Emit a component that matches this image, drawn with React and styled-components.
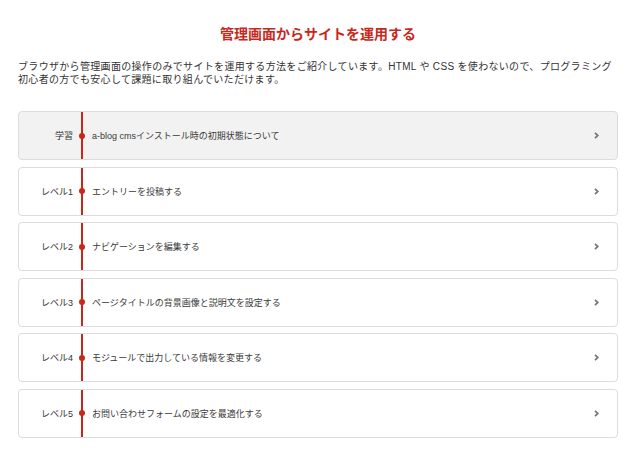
import React from "react";
import styled, { createGlobalStyle } from "styled-components";

const Global = createGlobalStyle`
  html, body { margin: 0; padding: 0; background: #fff; }
  body { font-family: "Liberation Sans", "Noto Sans CJK JP", sans-serif; color: #333; }
`;

const Page = styled.main`
  width: 600px;
  margin: 0 18px;
  padding-top: 24px;
`;

const Title = styled.h1`
  margin: 0;
  text-align: center;
  font-size: 14px;
  line-height: 20px;
  font-weight: bold;
  color: #c8281c;
`;

const Lead = styled.p`
  margin: 16px 0 0;
  font-size: 10px;
  line-height: 13px;
  letter-spacing: 0.32px;
  color: #333;
`;

const List = styled.ul`
  list-style: none;
  margin: 25px 0 0;
  padding: 0;
  display: flex;
  flex-direction: column;
  gap: 6.6px;
`;

const Card = styled.a`
  display: grid;
  grid-template-columns: 64px 1fr auto;
  align-items: stretch;
  height: 49px;
  box-sizing: border-box;
  border: 1px solid #dcdcdc;
  border-radius: 4px;
  background: ${(p) => (p.$active ? "#f2f2f2" : "#fff")};
  color: #333;
  text-decoration: none;
`;

const Label = styled.span`
  position: relative;
  display: flex;
  align-items: center;
  justify-content: flex-end;
  padding-right: 8px;
  border-right: 2px solid #c8281c;
  font-size: 9px;
  color: #333;
`;

const Dot = styled.span`
  position: absolute;
  right: -4px;
  top: 50%;
  width: 6px;
  height: 6px;
  margin-top: -3px;
  border-radius: 50%;
  background: #c8281c;
`;

const Name = styled.span`
  display: flex;
  align-items: center;
  padding-left: 9px;
  font-size: 9px;
  color: #3a3a3a;
`;

const Arrow = styled.span`
  display: flex;
  align-items: center;
  padding: 0 18px 0 10px;
  color: #777;
`;

const Chevron = () => (
  <svg width="5" height="7" viewBox="0 0 5 7" aria-hidden="true">
    <path d="M1 0.8 L3.8 3.5 L1 6.2" fill="none" stroke="currentColor" strokeWidth="1.8" />
  </svg>
);

const items = [
  { label: "学習", name: "a-blog cmsインストール時の初期状態について", active: true },
  { label: "レベル1", name: "エントリーを投稿する" },
  { label: "レベル2", name: "ナビゲーションを編集する" },
  { label: "レベル3", name: "ページタイトルの背景画像と説明文を設定する" },
  { label: "レベル4", name: "モジュールで出力している情報を変更する" },
  { label: "レベル5", name: "お問い合わせフォームの設定を最適化する" },
];

export default function App() {
  return (
    <>
      <Global />
      <Page>
        <Title>管理画面からサイトを運用する</Title>
        <Lead>
          ブラウザから管理画面の操作のみでサイトを運用する方法をご紹介しています。HTML や CSS を使わないので、プログラミング初心者の方でも安心して課題に取り組んでいただけます。
        </Lead>
        <List>
          {items.map((it) => (
            <li key={it.label}>
              <Card href="#" $active={it.active}>
                <Label>
                  {it.label}
                  <Dot />
                </Label>
                <Name>{it.name}</Name>
                <Arrow>
                  <Chevron />
                </Arrow>
              </Card>
            </li>
          ))}
        </List>
      </Page>
    </>
  );
}
